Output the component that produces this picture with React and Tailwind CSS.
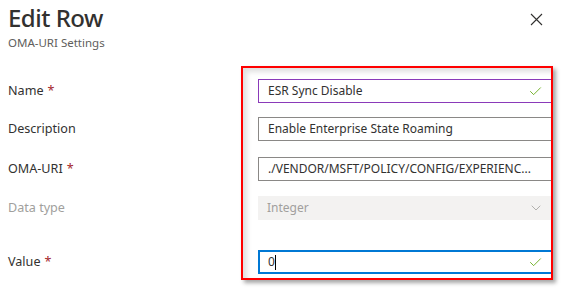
import { ChevronDown, Check } from "lucide-react";

const rows = [
  { label: "Name", required: true, h: "h-[38px]" },
  { label: "Description", h: "h-[40px]" },
  { label: "OMA-URI", required: true, h: "h-[39px]" },
  { label: "Data type", disabled: true, h: "h-[54px]" },
  { label: "Value", required: true, h: "h-[30px]" },
];

function FieldLabel({ row }) {
  return (
    <div className={`${row.h} flex items-start`}>
      <div
        className={`h-6 flex items-center text-[12.6px] ${
          row.disabled ? "text-[#a19f9d]" : "text-[#323130]"
        }`}
      >
        {row.label}
        {row.required ? <span className="ml-1 text-[#a4262c]">*</span> : null}
      </div>
    </div>
  );
}

function App() {
  return (
    <div
      className="w-[565px] h-[288px] bg-white overflow-hidden text-[#323130]"
      style={{ fontFamily: '"Noto Sans", "Open Sans", sans-serif' }}
    >
      {/* Header */}
      <div className="flex items-start justify-between pl-2 pr-[22px] pt-[2px]">
        <div>
          <h1 className="text-[24px] leading-8 font-medium tracking-[-0.5px]">
            Edit Row
          </h1>
          <p className="text-[11.5px] leading-4 text-[#605e5c] mt-[1px]">
            OMA-URI Settings
          </p>
        </div>
        <button className="mt-[11px] w-[13px] h-[13px] text-[#323130]">
          <svg viewBox="0 0 13 13" width="13" height="13">
            <path d="M1 1 L12 12 M12 1 L1 12" stroke="currentColor" strokeWidth="1.1" />
          </svg>
        </button>
      </div>

      {/* Form */}
      <div className="flex mt-[15px] pl-2">
        <div className="w-[233px] pt-[13px]">
          {rows.map((row) => (
            <FieldLabel key={row.label} row={row} />
          ))}
        </div>

        <div className="w-[312px] h-[214px] border-2 border-[#ff0000] overflow-hidden shadow-[3px_3px_4px_rgba(0,0,0,0.35),inset_4px_4px_5px_rgba(0,0,0,0.12)]">
          <div className="pl-[15px] pt-[11px] text-[12px]">
            <div className="h-[38px]">
              <div className="relative w-[296px] h-6 border border-[#8a3ab9] flex items-center pl-[9px]">
                ESR Sync Disable
                <Check className="absolute right-[10px] w-[15px] h-[15px] text-[#57a300]" strokeWidth={1.3} />
              </div>
            </div>
            <div className="h-[40px]">
              <div className="w-[296px] h-6 border border-[#8a8886] flex items-center pl-[9px]">
                Enable Enterprise State Roaming
              </div>
            </div>
            <div className="h-[39px]">
              <div className="w-[296px] h-6 border border-[#8a8886] flex items-center pl-[9px] whitespace-nowrap overflow-hidden">
                ./VENDOR/MSFT/POLICY/CONFIG/EXPERIENC...
              </div>
            </div>
            <div className="h-[54px]">
              <div className="relative w-[296px] h-6 bg-[#f3f2f1] flex items-center pl-[9px] text-[#a19f9d]">
                Integer
                <ChevronDown className="absolute right-[10px] w-[16px] h-[16px] text-[#a19f9d]" strokeWidth={1.2} />
              </div>
            </div>
            <div className="relative w-[296px] h-6 border-2 border-[#0078d4] flex items-center pl-[8px]">
              0
              <span className="inline-block w-px h-[15px] bg-black" />
              <Check className="absolute right-[9px] w-[15px] h-[15px] text-[#57a300]" strokeWidth={1.3} />
            </div>
          </div>
        </div>
      </div>
    </div>
  );
}

export default App;
